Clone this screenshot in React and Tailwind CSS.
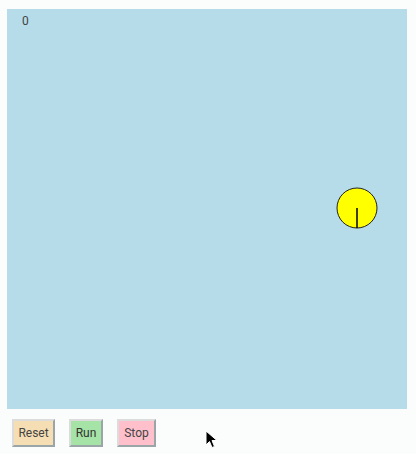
import React from 'react';

const Ball = () => (
    <svg className="absolute left-[329px] top-[178px]" width="42" height="42" viewBox="0 0 42 42">
        <circle cx="21" cy="21" r="20" fill="#ffff00" stroke="#222" strokeWidth="1" />
        <line x1="21" y1="21" x2="21" y2="41" stroke="#000" strokeWidth="1.5" />
    </svg>
);

const Cursor = () => (
    <svg className="absolute left-[205px] top-[430px]" width="14" height="20" viewBox="0 0 14 20">
        <path d="M1 1 L1 15 L4.5 11.5 L7 17.5 L9.5 16.5 L7 10.5 L12 10.5 Z" fill="#000" stroke="#fff" strokeWidth="1" />
    </svg>
);

export default function App() {
    return (
        <div className="relative w-[416px] h-[454px] bg-[#fbfdfd] pt-[9px] pl-[7px] font-['Roboto',sans-serif]">
            <div className="relative w-[400px] h-[400px] bg-[#b6dce9]">
                <span className="absolute left-[15px] top-[3px] text-[12px] text-[#444]">0</span>
                <Ball />
            </div>
            <div className="flex gap-[14px] mt-[10px] pl-[5px]">
                <button className="w-[43px] h-[28px] bg-[#f5deb3] border-2 border-t-[#dcdcdc] border-l-[#dcdcdc] border-r-[#9aa5a8] border-b-[#9aa5a8] text-[12px] text-[#444]">
                    Reset
                </button>
                <button className="w-[34px] h-[28px] bg-[#a6e3a6] border-2 border-t-[#dcdcdc] border-l-[#dcdcdc] border-r-[#9aa5a8] border-b-[#9aa5a8] text-[12px] text-[#333]">
                    Run
                </button>
                <button className="w-[39px] h-[28px] bg-[#ffc0cb] border-2 border-t-[#dcdcdc] border-l-[#dcdcdc] border-r-[#9aa5a8] border-b-[#9aa5a8] text-[12px] text-[#444]">
                    Stop
                </button>
            </div>
            <Cursor />
        </div>
    );
}
